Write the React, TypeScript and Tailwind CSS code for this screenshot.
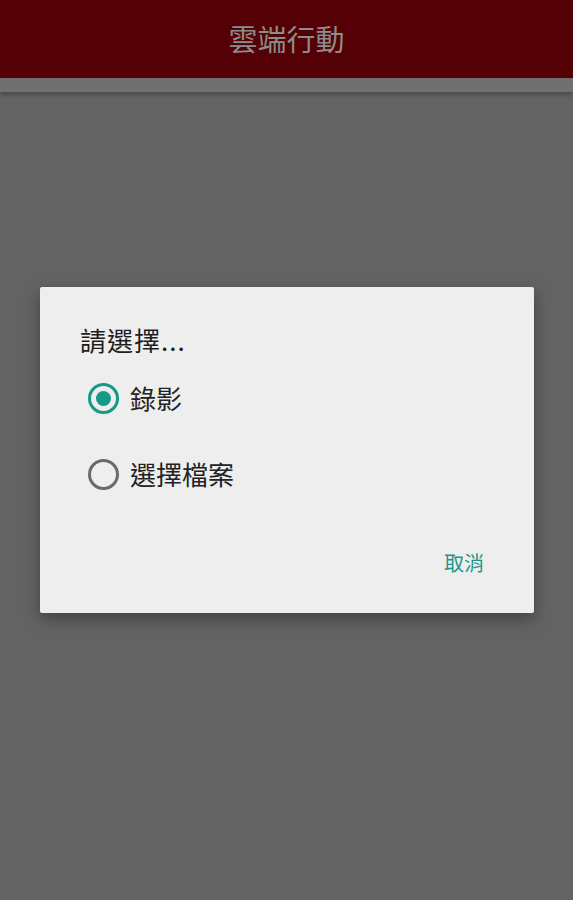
import React from "react";

const font = { fontFamily: '"Noto Sans CJK TC", "Noto Sans", sans-serif' };

function Radio({ checked }: { checked?: boolean }) {
  return (
    <span
      className={
        "flex h-[31px] w-[31px] items-center justify-center rounded-full border-[3px] " +
        (checked ? "border-[#139a8b]" : "border-[#6a6a6a]")
      }
    >
      {checked && <span className="h-[15px] w-[15px] rounded-full bg-[#139a8b]" />}
    </span>
  );
}

export default function App() {
  return (
    <div className="flex h-[900px] w-[573px] flex-col bg-[#636363]" style={font}>
      <header className="flex h-[78px] shrink-0 items-center justify-center bg-[#540004]">
        <span className="text-[29px] text-[#8c8c8c]">雲端行動</span>
      </header>
      <div className="h-[14px] shrink-0 bg-[#707070] shadow-[0_3px_4px_rgba(0,0,0,0.25)]" />
      <div className="flex flex-1 flex-col pt-[195px]">
        <div className="ml-[40px] h-[326px] w-[494px] rounded-[2px] bg-[#eeeeee] shadow-[0_6px_16px_rgba(0,0,0,0.35)]">
          <div className="px-[40px] pt-[36px] text-[26px] leading-[34px] tracking-[1px] text-[#1e1e1e]">請選擇...</div>
          <div className="mt-[24px] flex items-center gap-[11px] pl-[48px] text-[26px] leading-[34px] text-[#222]">
            <Radio checked />
            <span>錄影</span>
          </div>
          <div className="mt-[42px] flex items-center gap-[11px] pl-[48px] text-[26px] leading-[34px] text-[#222]">
            <Radio />
            <span>選擇檔案</span>
          </div>
          <div className="mt-[58px] flex justify-end pr-[50px]">
            <span className="text-[20px] leading-[28px] text-[#1a978a]">取消</span>
          </div>
        </div>
      </div>
    </div>
  );
}
